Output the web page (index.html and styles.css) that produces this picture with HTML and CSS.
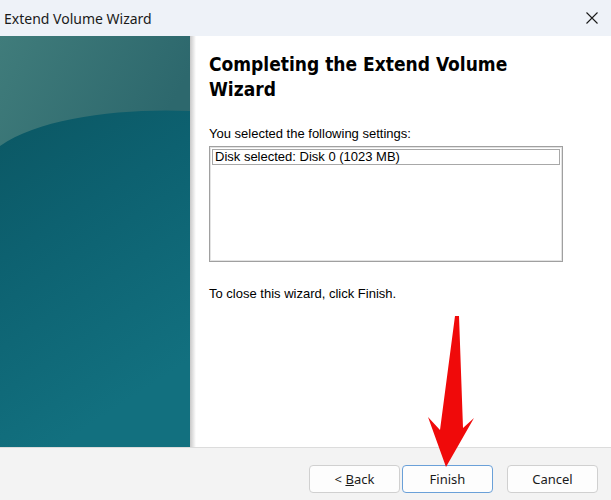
FILE: index.html
```
<!DOCTYPE html>
<html>
<head>
<meta charset="utf-8">
<link rel="stylesheet" href="styles.css">
</head>
<body>
<div class="window">
  <div class="titlebar">
    <span class="title">Extend Volume Wizard</span>
    <svg class="close" width="12" height="12" viewBox="0 0 12 12"><path d="M0.5 0.5 L11.5 11.5 M11.5 0.5 L0.5 11.5" stroke="#1a1a1a" stroke-width="1.1" fill="none"/></svg>
  </div>
  <div class="body">
    <div class="sidebar">
      <svg width="190" height="411" viewBox="0 0 190 411" preserveAspectRatio="none">
        <defs>
          <linearGradient id="lower" x1="0" y1="0" x2="0.3" y2="1">
            <stop offset="0" stop-color="#0a525d"/>
            <stop offset="0.5" stop-color="#0d6170"/>
            <stop offset="1" stop-color="#12707f"/>
          </linearGradient>
          <linearGradient id="upper" x1="0" y1="0" x2="1" y2="0.3">
            <stop offset="0" stop-color="#407c7b"/>
            <stop offset="1" stop-color="#2d686d"/>
          </linearGradient>
        </defs>
        <rect x="0" y="0" width="190" height="411" fill="url(#lower)"/>
        <path d="M0 0 H190 V75 C120 72 40 82 0 110 Z" fill="url(#upper)"/>
      </svg>
    </div>
    <div class="edge"></div>
    <div class="content">
      <h1 class="heading">Completing the Extend Volume Wizard</h1>
      <p class="label">You selected the following settings:</p>
      <div class="listbox">
        <div class="item">Disk selected: Disk 0 (1023 MB)</div>
      </div>
      <p class="closing">To close this wizard, click Finish.</p>
    </div>
  </div>
  <div class="footer">
    <button class="btn"><span>&lt; <u>B</u>ack</span></button>
    <button class="btn primary">Finish</button>
    <button class="btn cancel">Cancel</button>
  </div>
  <svg class="arrow" width="611" height="500" viewBox="0 0 611 500">
    <polygon points="455,316 459,316 463,428 474,418 446,467 428,417 440,430" fill="#f00a0a"/>
  </svg>
</div>
</body>
</html>
```
FILE: styles.css
```
html, body {
  margin: 0;
  padding: 0;
  background: #ffffff;
}
.window {
  position: relative;
  width: 611px;
  height: 500px;
  overflow: hidden;
  display: flex;
  flex-direction: column;
  font-family: "Liberation Sans", Arial, sans-serif;
}
.titlebar {
  height: 36px;
  flex: none;
  background: #eef2f8;
  display: flex;
  align-items: center;
  justify-content: space-between;
  padding: 0 13px 0 4px;
}
.title {
  font-family: "Noto Sans", "Open Sans", sans-serif;
  font-size: 14px;
  color: #1a1a1a;
}
.close {
  display: block;
}
.body {
  height: 411px;
  flex: none;
  display: flex;
  background: #ffffff;
}
.sidebar {
  width: 190px;
  flex: none;
}
.sidebar svg {
  display: block;
}
.edge {
  width: 6px;
  flex: none;
  background: linear-gradient(to right, #c8c8c8, #ffffff);
}
.content {
  flex: 1;
  padding: 16px 0 0 13px;
}
.heading {
  margin: 0;
  width: 360px;
  font-family: "DejaVu Sans Condensed", "DejaVu Sans", Verdana, sans-serif;
  font-stretch: condensed;
  font-weight: bold;
  font-size: 19px;
  line-height: 25px;
  color: #000000;
}
.label {
  margin: 24px 0 0 0;
  font-size: 13px;
  line-height: 15px;
  color: #000000;
}
.listbox {
  margin-top: 5px;
  width: 348px;
  height: 112px;
  border: 1px solid #a0a0a0;
  box-shadow: inset 1px 1px 0 #e3e3e3, inset -1px -1px 0 #e3e3e3;
  padding: 2px 2px 0 2px;
  box-sizing: content-box;
}
.item {
  border: 1px solid #a8a8a8;
  height: 14px;
  line-height: 14px;
  padding-left: 2px;
  font-size: 13px;
  color: #000000;
}
.closing {
  margin: 24px 0 0 0;
  font-size: 13px;
  line-height: 15px;
  color: #000000;
}
.footer {
  flex: 1;
  border-top: 1px solid #dcdcdc;
  background: #f3f3f3;
  display: flex;
  justify-content: flex-end;
  align-items: flex-start;
  padding: 17px 13px 0 0;
  gap: 2px;
}
.btn {
  width: 91px;
  height: 28px;
  box-sizing: border-box;
  border: 1px solid #d0d0d0;
  border-radius: 4px;
  background: #fdfdfd;
  font-family: "Noto Sans", "Open Sans", sans-serif;
  font-size: 13px;
  color: #1a1a1a;
  padding: 0;
}
.btn.primary {
  border-color: #6aa0d8;
}
.btn.cancel {
  margin-left: 12px;
}
.arrow {
  position: absolute;
  left: 0;
  top: 0;
  pointer-events: none;
}
```
